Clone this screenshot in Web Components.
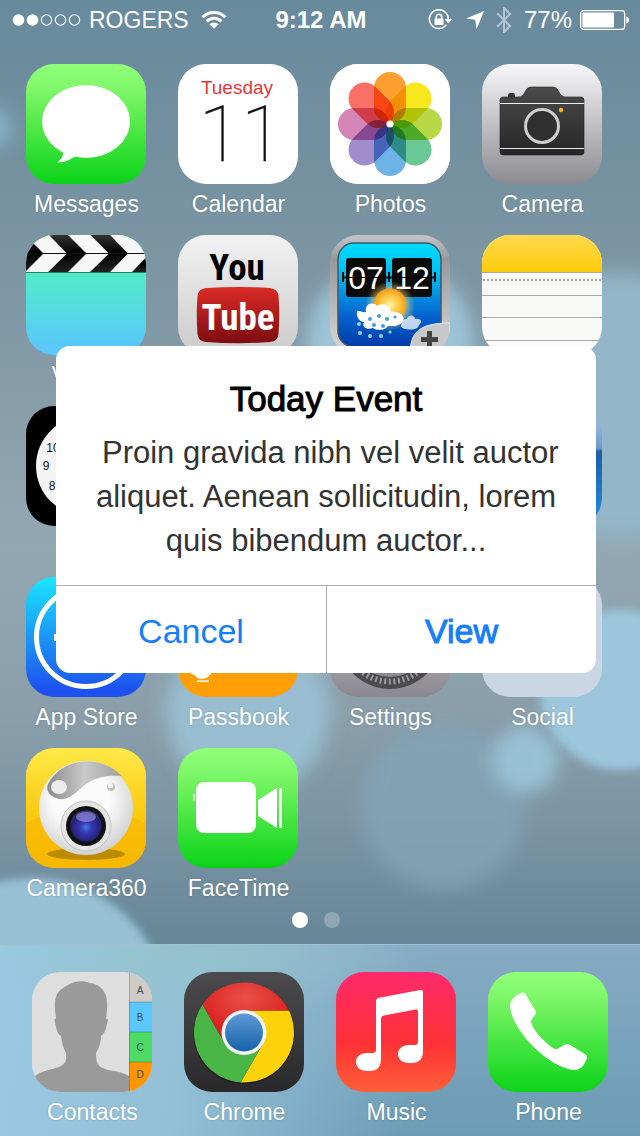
<!DOCTYPE html>
<html lang="en">
<head>
<meta charset="utf-8">
<meta name="viewport" content="width=device-width, initial-scale=1">
<title>Home screen</title>
<style>
  html, body { margin: 0; min-height: 100%; }
  body { font-family: "Liberation Sans", Arial, sans-serif; background: #7b95a3; }
</style>
</head>
<body>
<home-screen></home-screen>

<template id="wall-paper">
  <style>
    :host { display: block; position: absolute; inset: 0; overflow: hidden; }
    svg { display: block; width: 100%; height: 100%; }
  </style>
  <svg viewBox="0 0 640 1136" preserveAspectRatio="xMidYMid slice" aria-hidden="true">
    <defs>
      <linearGradient id="sky" x1="0" y1="0" x2="0" y2="1">
        <stop offset="0" stop-color="#688a9d"/>
        <stop offset=".15" stop-color="#7591a0"/>
        <stop offset=".3" stop-color="#8299a6"/>
        <stop offset=".48" stop-color="#93a8b3"/>
        <stop offset=".62" stop-color="#8b9fab"/>
        <stop offset=".72" stop-color="#7c95a3"/>
        <stop offset=".82" stop-color="#68889a"/>
        <stop offset="1" stop-color="#68889a"/>
      </linearGradient>
      <filter id="soft" x="-30%" y="-30%" width="160%" height="160%"><feGaussianBlur stdDeviation="9"/></filter>
      <filter id="edge" x="-20%" y="-20%" width="140%" height="140%"><feGaussianBlur stdDeviation="4"/></filter>
    </defs>
    <rect width="640" height="1136" fill="url(#sky)"/>
    <circle cx="-8" cy="128" r="20" fill="#88b0c8" filter="url(#soft)"/>
    <circle cx="390" cy="345" r="84" fill="#9cc3d6" filter="url(#soft)"/>
    <circle cx="620" cy="405" r="132" fill="#93b6c8" filter="url(#soft)"/>
    <circle cx="248" cy="712" r="82" fill="#98bdd0" filter="url(#soft)"/>
    <circle cx="620" cy="690" r="80" fill="#9bc6dc" filter="url(#edge)"/>
    <circle cx="443" cy="808" r="82" fill="#84a5b8" opacity=".75" filter="url(#soft)"/>
    <circle cx="525" cy="760" r="33" fill="#9bc5da" opacity=".9" filter="url(#soft)"/>
    <circle cx="32" cy="1014" r="136" fill="#98c1d6" filter="url(#edge)"/>
  </svg>
</template>

<template id="status-bar">
  <style>
    :host {
      display: grid; grid-template-columns: 1fr auto 1fr; align-items: center;
      height: 40px; padding: 0 10px 0 12px; color: #fff; font-size: 23px; line-height: 40px;
    }
    .side { display: flex; align-items: center; }
    .end { justify-content: flex-end; }
    .carrier { margin: 0 12px 0 8px; }
    time { font-size: 24px; font-weight: bold; }
    .level { font-size: 24px; margin: 0 8px 0 12px; }
    .arrow { margin: 0 12px 0 14px; }
    svg { display: block; flex: none; }
  </style>
  <div class="side">
    <svg width="69" height="14" viewBox="0 0 69 14" aria-hidden="true">
      <g fill="#fff"><circle cx="6.5" cy="7" r="5.8"/><circle cx="20.5" cy="7" r="5.8"/></g>
      <g fill="none" stroke="#fff" stroke-width="1.1"><circle cx="34.5" cy="7" r="5.2"/><circle cx="48.5" cy="7" r="5.2"/><circle cx="62.5" cy="7" r="5.2"/></g>
    </svg>
    <span class="carrier">ROGERS</span>
    <svg width="26" height="20" viewBox="0 0 26 20" aria-hidden="true">
      <g fill="none" stroke="#fff" stroke-width="3"><path d="M1.5 7.2A16.2 16.2 0 0 1 24.5 7.2"/><path d="M5.6 11.4A10.4 10.4 0 0 1 20.4 11.4"/></g>
      <path d="M8.5 14.3A6.4 6.4 0 0 1 17.5 14.3L13 18.8Z" fill="#fff"/>
    </svg>
  </div>
  <time>9:12 AM</time>
  <div class="side end">
    <svg width="24" height="22" viewBox="0 0 24 22" aria-hidden="true">
      <path d="M18.4 15.6A9.4 9.4 0 1 1 20.2 10" fill="none" stroke="#fff" stroke-width="1.6"/>
      <path d="M16.6 10H24L20.3 14.4Z" fill="#fff"/>
      <rect x="6.5" y="9.5" width="9" height="6.4" rx=".8" fill="#fff"/>
      <path d="M8.3 10V8A2.7 2.7 0 0 1 13.7 8V10" fill="none" stroke="#fff" stroke-width="1.6"/>
    </svg>
    <svg class="arrow" width="18" height="18" viewBox="0 0 18 18" aria-hidden="true"><path d="M18 0L10.6 18L9.2 8.8L0 7.4Z" fill="#fff"/></svg>
    <svg width="16" height="26" viewBox="0 0 16 26" aria-hidden="true"><path d="M1.2 6.2L14 19L8 25V1L14 7L1.2 19.8" fill="none" stroke="#b3c6d1" stroke-width="2"/></svg>
    <span class="level">77%</span>
    <svg width="50" height="20" viewBox="0 0 50 20" aria-hidden="true">
      <rect x=".7" y=".7" width="44" height="18.6" rx="3" fill="none" stroke="#fff" stroke-width="1.3"/>
      <rect x="2.4" y="2.4" width="31.6" height="15.2" rx="1" fill="#fff"/>
      <path d="M46.3 6.5C50 7 50 13 46.3 13.5Z" fill="#fff"/>
    </svg>
  </div>
</template>

<template id="app-icon">
  <style>
    :host { display: block; width: 120px; }
    button {
      display: flex; flex-direction: column; align-items: center; width: 100%;
      margin: 0; padding: 0; border: 0; background: none; color: #fff; font: inherit; cursor: pointer;
    }
    .tile { display: block; width: 120px; height: 120px; border-radius: 28px; overflow: hidden; background: var(--tile, none); }
    .name { margin-top: 7px; padding-left: 1px; min-height: 27px; font-size: 23px; line-height: 27px; white-space: nowrap; text-align: center; text-shadow: 0 0 2px rgb(40 60 75 / .25); }
    ::slotted(svg) { display: block; width: 120px; height: 120px; }
  </style>
  <button type="button"><span class="tile"><slot></slot></span><span class="name"><slot name="name"></slot></span></button>
</template>

<template id="page-dots">
  <style>
    :host { display: flex; justify-content: center; gap: 16px; padding: 10px 8px 16px 0; }
    i { width: 16px; height: 16px; border-radius: 50%; background: rgb(255 255 255 / .25); }
    i.on { background: #fff; }
  </style>
  <i class="on"></i><i></i>
</template>

<template id="app-dock">
  <style>
    :host {
      display: flex; justify-content: space-between; box-sizing: border-box; margin-top: auto;
      padding: 27px 32px 10px; border-top: 1px solid #a2c0ce;
      background:
        radial-gradient(220px 80px at 190px 0, rgb(150 196 200 / .7), transparent),
        linear-gradient(100deg, #9ac9e2 0, #93c0d6 30%, rgb(125 170 195 / 0) 65%),
        linear-gradient(#86abc3, #6c9cb5);
    }
  </style>
  <slot></slot>
</template>

<template id="alert-dialog">
  <style>
    :host { display: block; border-radius: 14px; overflow: hidden; background: #fff; text-align: center; }
    .text { padding: 31px 32px 22px; }
    h2 { margin: 0 0 10px; font-size: 35px; line-height: 44px; font-weight: normal; color: #000; -webkit-text-stroke: 1px #000; }
    p { margin: 0; font-size: 31px; line-height: 44px; color: #333; }
    .actions { display: grid; grid-template-columns: 1fr 1fr; border-top: 1px solid #a9abad; }
    button { margin: 0; padding: 3px 0 0; height: 87px; border: 0; background: none; font: inherit; font-size: 34px; color: #147efb; cursor: pointer; }
    button + button { border-left: 1px solid #a9abad; -webkit-text-stroke: 1px #147efb; }
  </style>
  <div class="text"><h2><slot name="title"></slot></h2><p><slot></slot></p></div>
  <div class="actions"><button type="button">Cancel</button><button type="button">View</button></div>
</template>

<template id="home-screen">
  <style>
    :host { display: flex; flex-direction: column; position: relative; min-height: 100vh; }
    wall-paper { z-index: 0; }
    status-bar, main, page-dots, app-dock { position: relative; z-index: 1; }
    main { display: grid; grid-template-columns: repeat(4, 120px); justify-content: space-between; row-gap: 17px; padding: 24px 38px 0 26px; }
    .last { grid-column: 4; }
    .overlay { position: absolute; inset: 0; z-index: 2; padding: 346px 44px 0 56px; }
    .green { --tile: linear-gradient(#90ff78, #80f76a 20%, #0bd318); }
    .petals rect { mix-blend-mode: multiply; }
  </style>
  <wall-paper></wall-paper>
  <status-bar></status-bar>
  <main>
    <app-icon class="green">
      <svg viewBox="0 0 120 120"><g fill="#fff"><ellipse cx="60" cy="57.5" rx="44" ry="36.5"/><path d="M37 84C38 91 36 95 31 98.5C39 98.500 44 95.500 49 92.500Z"/></g></svg>
      <span slot="name">Messages</span>
    </app-icon>
    <app-icon style="--tile:#fff">
      <svg viewBox="0 0 120 120">
        <text x="59" y="30" text-anchor="middle" font-size="19" fill="#e8363b">Tuesday</text>
        <text x="63" y="97" text-anchor="middle" font-family="Roboto, Inter, sans-serif" font-weight="100" font-size="77" fill="#111" stroke="#111" stroke-width=".3">11</text>
      </svg>
      <span slot="name">Calendar</span>
    </app-icon>
    <app-icon style="--tile:#fff">
      <svg viewBox="0 0 120 120">
        <g style="isolation:isolate">
          <rect width="120" height="120" fill="#fff"/>
          <g class="petals">
            <rect x="44" y="8" width="32" height="51" rx="16" fill="#fc9f30"/>
            <rect x="44" y="8" width="32" height="51" rx="16" fill="#f6e71f" transform="rotate(45 60 60)"/>
            <rect x="44" y="8" width="32" height="51" rx="16" fill="#b8d945" transform="rotate(90 60 60)"/>
            <rect x="44" y="8" width="32" height="51" rx="16" fill="#6ac895" transform="rotate(135 60 60)"/>
            <rect x="44" y="8" width="32" height="51" rx="16" fill="#6eb3e6" transform="rotate(180 60 60)"/>
            <rect x="44" y="8" width="32" height="51" rx="16" fill="#a08dcb" transform="rotate(225 60 60)"/>
            <rect x="44" y="8" width="32" height="51" rx="16" fill="#d486b6" transform="rotate(270 60 60)"/>
            <rect x="44" y="8" width="32" height="51" rx="16" fill="#f97066" transform="rotate(315 60 60)"/>
          </g>
          <circle cx="60" cy="60" r="3.6" fill="#fff"/>
        </g>
      </svg>
      <span slot="name">Photos</span>
    </app-icon>
    <app-icon style="--tile:linear-gradient(#f7f7f9,#8a8a90)">
      <svg viewBox="0 0 120 120">
        <defs><linearGradient id="cam" x1="0" y1="0" x2="0" y2="1"><stop offset="0" stop-color="#4b4b4b"/><stop offset="1" stop-color="#262626"/></linearGradient></defs>
        <path d="M26 33V31Q26 29 28 29H31Q33 29 33 31V33Z" fill="#333"/>
        <path d="M21 33H36Q41 33 43 28Q45 23 49 23H71Q75 23 77 28Q79 33 84 33H99Q102 33 102 36V88Q102 91 99 91H21Q18 91 18 88V36Q18 33 21 33Z" fill="url(#cam)" stroke="#222" stroke-width=".6"/>
        <path d="M18 39.500H102M18 84.500H102" stroke="#eee" stroke-width="1.200"/>
        <circle cx="60" cy="62" r="16.500" fill="#303030" stroke="#cfcfcf" stroke-width="3"/>
        <circle cx="79" cy="46" r="2.200" fill="#fdb515"/>
      </svg>
      <span slot="name">Camera</span>
    </app-icon>

    <app-icon style="--tile:linear-gradient(#52edc7 37px,#5ac8fb 112px)">
      <svg viewBox="0 0 120 120">
        <defs><linearGradient id="clap" x1="0" y1="0" x2="0" y2="1"><stop offset="0" stop-color="#333"/><stop offset=".5" stop-color="#000"/><stop offset="1" stop-color="#222"/></linearGradient></defs>
        <rect width="120" height="37" fill="#f7f7f7"/>
        <g fill="url(#clap)"><path d="M-20 0H-1L17.500 18.500L-1 37H-20Z"/><path d="M23 0H42L60.500 18.500L42 37H22L41 18.500Z"/><path d="M64.500 0H84L102 18.500L84 37H64L83 18.500Z"/><path d="M106 37L124 18.500V37Z"/></g>
        <rect y="18" width="120" height="1" fill="#111"/><rect y="37" width="120" height="1" fill="#2b7a6d"/>
      </svg>
      <span slot="name">Videos</span>
    </app-icon>
    <app-icon style="--tile:linear-gradient(#f2f2f2,#cbcbcb)" aria-label="YouTube">
      <svg viewBox="0 0 120 120" font-family="'Roboto Condensed', 'Open Sans Condensed', Roboto, sans-serif" font-weight="bold" text-anchor="middle">
        <defs><linearGradient id="tube" x1="0" y1="0" x2="0" y2="1"><stop offset="0" stop-color="#dc2b27"/><stop offset="1" stop-color="#7d0c10"/></linearGradient></defs>
        <text x="59" y="45" font-size="37" fill="#000">You</text>
        <path d="M28 53Q60 51 92 53Q100 54 100.500 61Q102 80 100.500 99Q100 106 92 107Q60 109.500 28 107Q20 106 19.500 99Q18 80 19.500 61Q20 54 28 53Z" fill="url(#tube)"/>
        <text x="60" y="95" font-size="37" fill="#fff">Tube</text>
      </svg>
    </app-icon>
    <app-icon style="--tile:linear-gradient(#c4c6c9,#96989b 20%,#d8dadc)" aria-label="Weather">
      <svg viewBox="0 0 120 120">
        <defs>
          <linearGradient id="wx" x1="0" y1="0" x2="0" y2="1"><stop offset="0" stop-color="#00dcff"/><stop offset=".3" stop-color="#00bdf2"/><stop offset=".7" stop-color="#0563cf"/><stop offset="1" stop-color="#003aa8"/></linearGradient>
          <radialGradient id="sun"><stop offset="0" stop-color="#fff3a0"/><stop offset=".6" stop-color="#ffc43a"/><stop offset="1" stop-color="#f39a1e"/></radialGradient>
          <radialGradient id="glow"><stop offset=".4" stop-color="#ffe27a" stop-opacity=".9"/><stop offset="1" stop-color="#ffe27a" stop-opacity="0"/></radialGradient>
        </defs>
        <rect x="8" y="8" width="103" height="104" rx="16" fill="url(#wx)" stroke="#3e5968" stroke-width="1.500"/>
        <g fill="#0b0b0b"><rect x="16" y="23" width="40" height="39" rx="3"/><rect x="62" y="23" width="40" height="39" rx="3"/><path d="M12 37H14V47H12ZM58 37H60V47H58ZM104 37H106V47H104Z"/><path d="M12 41.500H106V43.500H12Z"/></g>
        <g fill="#fff" font-size="32" text-anchor="middle"><text x="36" y="54">07</text><text x="82" y="54">12</text></g>
        <path d="M16 42.500H102" stroke="#000" stroke-width="1"/>
        <circle cx="60" cy="71" r="25" fill="url(#glow)"/>
        <circle cx="60" cy="70" r="16.500" fill="url(#sun)"/>
        <g fill="#fff"><path d="M72 88C72 84 77 84 77 84C78 79 85 80 85 84C91 83 93 87 89 90C88 95 80 95 76 94C71 94 70 90 72 88Z" opacity=".75"/>
        <path d="M27 76C29 75 33 78 36 77C34 69 43 66 47 71C52 67 61 70 61 77C68 76 76 80 73 86C70 92 61 91 58 91C53 97 46 95 43 93C38 95 31 93 34 87C29 87 26 81 27 76Z"/></g>
        <g fill="#3aa2d8"><circle cx="40" cy="84" r="2"/><circle cx="49" cy="81" r="2"/><circle cx="57" cy="84" r="2"/><circle cx="65" cy="82" r="1.600"/><circle cx="44" cy="90" r="2"/><circle cx="53" cy="91" r="2"/></g>
        <g fill="#8fd4f0"><circle cx="29" cy="89" r="2"/><circle cx="30" cy="98" r="2"/><circle cx="40" cy="101" r="2"/><circle cx="51" cy="101" r="2"/><circle cx="60" cy="97" r="1.600"/></g>
        <path d="M80 120C80 98 88 88 120 88V120Z" fill="#c6c8ca" stroke="#eee" stroke-width="1"/>
        <path d="M97 96H102V102H108V107H102V116H97V107H91V102H97Z" fill="#444"/>
      </svg>
    </app-icon>
    <app-icon style="--tile:#f9f9f8" aria-label="Notes">
      <svg viewBox="0 0 120 120">
        <defs><linearGradient id="note" x1="0" y1="0" x2="0" y2="1"><stop offset="0" stop-color="#ffd94f"/><stop offset="1" stop-color="#fecb0a"/></linearGradient></defs>
        <rect width="120" height="37" fill="url(#note)"/>
        <path d="M0 37.500H120M0 60.500H120M0 82.500H120M0 105.500H120" stroke="#a9a9a9" stroke-width="1"/>
        <path d="M1 45H120" stroke="#aaa" stroke-width="2" stroke-dasharray="2 2"/>
      </svg>
    </app-icon>

    <app-icon style="--tile:#000" aria-label="Clock">
      <svg viewBox="0 0 120 120"><circle cx="60" cy="60" r="50" fill="#f4f4f4"/><g font-size="12" fill="#111" text-anchor="middle"><text x="27" y="46">10</text><text x="20" y="64">9</text><text x="26" y="84">8</text></g></svg>
    </app-icon>
    <app-icon class="last" style="--tile:linear-gradient(#a9c6e8,#6f9bd0 35%,#1d5ea8 38%,#2490dc)" aria-label="App"></app-icon>

    <app-icon style="--tile:linear-gradient(#19e6ff,#1d50ee 95%)">
      <svg viewBox="0 0 120 120"><circle cx="60" cy="60" r="49.500" fill="none" stroke="#fff" stroke-width="5"/><path d="M28 60.500H92M64 30L40 80M56 30L82 84" stroke="#fff" stroke-width="7" fill="none"/></svg>
      <span slot="name">App Store</span>
    </app-icon>
    <app-icon style="--tile:#ff9f05">
      <svg viewBox="0 0 120 120"><path d="M17 88H32V93Q34 96 32 98Q28 102 23 102Q18 101 17 98Q13 98 13 95L17 94ZM19 103.500H31V105H19Z" fill="#fff"/></svg>
      <span slot="name">Passbook</span>
    </app-icon>
    <app-icon style="--tile:linear-gradient(#d4d4d8,#8b898f)">
      <svg viewBox="0 0 120 120"><circle cx="60" cy="60" r="52" fill="#4b4a4c"/><circle cx="60" cy="60" r="44.500" fill="none" stroke="#9c9a9f" stroke-width="6" stroke-dasharray="2 2.600"/><circle cx="60" cy="60" r="38" fill="none" stroke="#8c8b8f" stroke-width="4"/></svg>
      <span slot="name">Settings</span>
    </app-icon>
    <app-icon style="--tile:#cad6e4"><span slot="name">Social</span></app-icon>

    <app-icon style="--tile:linear-gradient(#ffe948,#fbc70c 60%,#f5b700)">
      <svg viewBox="0 0 120 120">
        <defs>
          <radialGradient id="ball" cx=".45" cy=".4" r=".62"><stop offset=".5" stop-color="#fbfbfb"/><stop offset="1" stop-color="#cfcfd0"/></radialGradient>
          <linearGradient id="hood" x1="0" y1="0" x2="1" y2="0"><stop offset="0" stop-color="#8b8b8b"/><stop offset=".5" stop-color="#c9c9c9"/><stop offset="1" stop-color="#9f9f9f"/></linearGradient>
          <radialGradient id="glass" cx=".5" cy=".55" r=".6"><stop offset="0" stop-color="#3f7fe0"/><stop offset=".3" stop-color="#3638b4"/><stop offset=".8" stop-color="#23206e"/><stop offset="1" stop-color="#3f6fd0"/></radialGradient>
        </defs>
        <path d="M0 76Q20 62 60 62T120 76V120H0Z" fill="#f9b800" opacity=".6"/>
        <ellipse cx="60" cy="106" rx="39" ry="6" fill="#a87c00" opacity=".75"/>
        <circle cx="60" cy="60" r="47" fill="url(#ball)"/>
        <path d="M22 36C32 18 50 12 66 13.500C80 15 90 22 96 28C72 26 62 34 53 42C46 48 38 54 30 50C22 47 20 41 22 36Z" fill="url(#hood)"/>
        <ellipse cx="33" cy="39" rx="8" ry="7" fill="#ececec"/><circle cx="85" cy="39" r="4" fill="#bdbdbd"/><circle cx="84.500" cy="37.500" r="2.800" fill="#f4f4f4"/>
        <circle cx="60" cy="78" r="25" fill="#e4e4e4" stroke="#c0c0c0"/><circle cx="60" cy="78" r="20" fill="#111"/><circle cx="60" cy="78" r="15.500" fill="url(#glass)"/>
        <ellipse cx="60" cy="69" rx="10" ry="5" fill="#a79be4" opacity=".6"/>
      </svg>
      <span slot="name">Camera360</span>
    </app-icon>
    <app-icon class="green">
      <svg viewBox="0 0 120 120"><g fill="#fff"><rect x="18" y="34" width="60" height="51" rx="8"/><path d="M80 52L99 40V80L80 68Z"/><rect x="101" y="40" width="3" height="40"/><rect x="15" y="46" width="1.500" height="7"/></g></svg>
      <span slot="name">FaceTime</span>
    </app-icon>
  </main>
  <page-dots></page-dots>
  <app-dock>
    <app-icon style="--tile:#dedede">
      <svg viewBox="0 0 120 120">
        <path d="M2 104.500C10 99 18 98 27 95C33 92 35 90 34 81C31 76 30 70 29 64C25 62 24 55 22.500 48C23 46 24 47 24 46C23 40 22 30 24 25C25 20 30 16 36 13C42 9 50 8 58 11C66 12 72 17 74 24C76 30 75 40 74 47C76 46 76 48 75.500 50C74 56 73 62 69 64C69 70 67 76 64 81C64 92 66 95 76 98C84 99 92 101 97 104V120H2Z" fill="#9a9a9a"/>
        <rect x="97" width="23" height="30" fill="#cfccc7"/><rect x="97" y="30" width="23" height="30" fill="#5ac8fc"/><rect x="97" y="60" width="23" height="30" fill="#4cdb66"/><rect x="97" y="90" width="23" height="30" fill="#ff9500"/>
        <path d="M97.500 0V120M97 30H120M97 60H120M97 90H120" stroke="#000" stroke-opacity=".2" stroke-width="1"/>
        <g font-size="10" fill="#3c4a4c" text-anchor="middle"><text x="108" y="22">A</text><text x="108" y="49">B</text><text x="108" y="79">C</text><text x="108" y="106">D</text></g>
      </svg>
      <span slot="name">Contacts</span>
    </app-icon>
    <app-icon style="--tile:linear-gradient(#4b4b4d,#29292b)">
      <svg viewBox="0 0 120 120">
        <defs>
          <radialGradient id="red" cx=".5" cy=".25" r=".6"><stop offset="0" stop-color="#e85048"/><stop offset="1" stop-color="#dc1f1f"/></radialGradient>
          <linearGradient id="hub" x1="0" y1="0" x2="0" y2="1"><stop offset="0" stop-color="#5c9ad6"/><stop offset="1" stop-color="#1763a8"/></linearGradient>
        </defs>
        <circle cx="60" cy="61.500" r="50.500" fill="#1a1a1a"/>
        <path d="M60 38.500H104.900A50 50 0 0 1 56.600 110.400L79 71.500Z" fill="#fdd20a"/>
        <path d="M79 71.500L56.600 110.400A50 50 0 0 1 18.500 32.600L41 71.500Z" fill="#4bb648"/>
        <path d="M41 71.500L18.500 32.600A50 50 0 0 1 104.900 38.500H60Z" fill="url(#red)"/>
        <circle cx="60" cy="60.500" r="22.500" fill="#f2f4f7"/><circle cx="60" cy="60.500" r="19" fill="url(#hub)"/>
      </svg>
      <span slot="name">Chrome</span>
    </app-icon>
    <app-icon style="--tile:linear-gradient(#ff2a6b,#ff3136 60%,#ff6038)">
      <svg viewBox="0 0 120 120"><path d="M40 29Q40 27 42 26L84 18Q87 17.500 87 20V79C87 87 83 91 76 91H73C66 91 62 87 62 82C62 77 66 73 73 73H78C81 73 82 72 82 69V39.500Q82 37 79.500 37.500L48 43.500Q45 44 45 47V87C45 95 41 99 34 99H31C24 99 20 95 20 90C20 85 24 81 31 81H36C39 81 40 80 40 77Z" fill="#fff"/></svg>
      <span slot="name">Music</span>
    </app-icon>
    <app-icon class="green">
      <svg viewBox="0 0 120 120"><path d="M22 33C22 28 28 23 33 21C36 20 37 21 38 23L47 38C48.500 40.500 48 42 46 44L44 47C42.500 49.500 43 51 44 53C48 62 59 72 65 76C68 77.500 69 77 71 76L76 73C79 71.500 80 72 82 73L97 82C99 83.500 99.500 84.500 98.500 87C96 94 92 98 87 98C75 98 55 86 40 69C28 55 22 42 22 33Z" fill="#fff"/></svg>
      <span slot="name">Phone</span>
    </app-icon>
  </app-dock>
  <div class="overlay">
    <alert-dialog role="alertdialog" aria-label="Today Event">
      <span slot="title">Today Event</span>&nbsp;Proin gravida nibh vel velit auctor aliquet. Aenean sollicitudin, lorem quis bibendum auctor...</alert-dialog>
  </div>
</template>

<script>
  class TemplateElement extends HTMLElement {
    constructor() {
      super();
      const template = document.getElementById(this.localName);
      this.attachShadow({ mode: "open" }).append(template.content.cloneNode(true));
    }
  }
  class WallPaper extends TemplateElement {}
  class StatusBar extends TemplateElement {}
  class AppIcon extends TemplateElement {
    connectedCallback() {
      const label = this.getAttribute("aria-label");
      if (label) this.shadowRoot.querySelector("button").setAttribute("aria-label", label);
    }
  }
  class PageDots extends TemplateElement {}
  class AppDock extends TemplateElement {}
  class AlertDialog extends TemplateElement {}
  class HomeScreen extends TemplateElement {}

  customElements.define("wall-paper", WallPaper);
  customElements.define("status-bar", StatusBar);
  customElements.define("app-icon", AppIcon);
  customElements.define("page-dots", PageDots);
  customElements.define("app-dock", AppDock);
  customElements.define("alert-dialog", AlertDialog);
  customElements.define("home-screen", HomeScreen);
</script>
</body>
</html>
